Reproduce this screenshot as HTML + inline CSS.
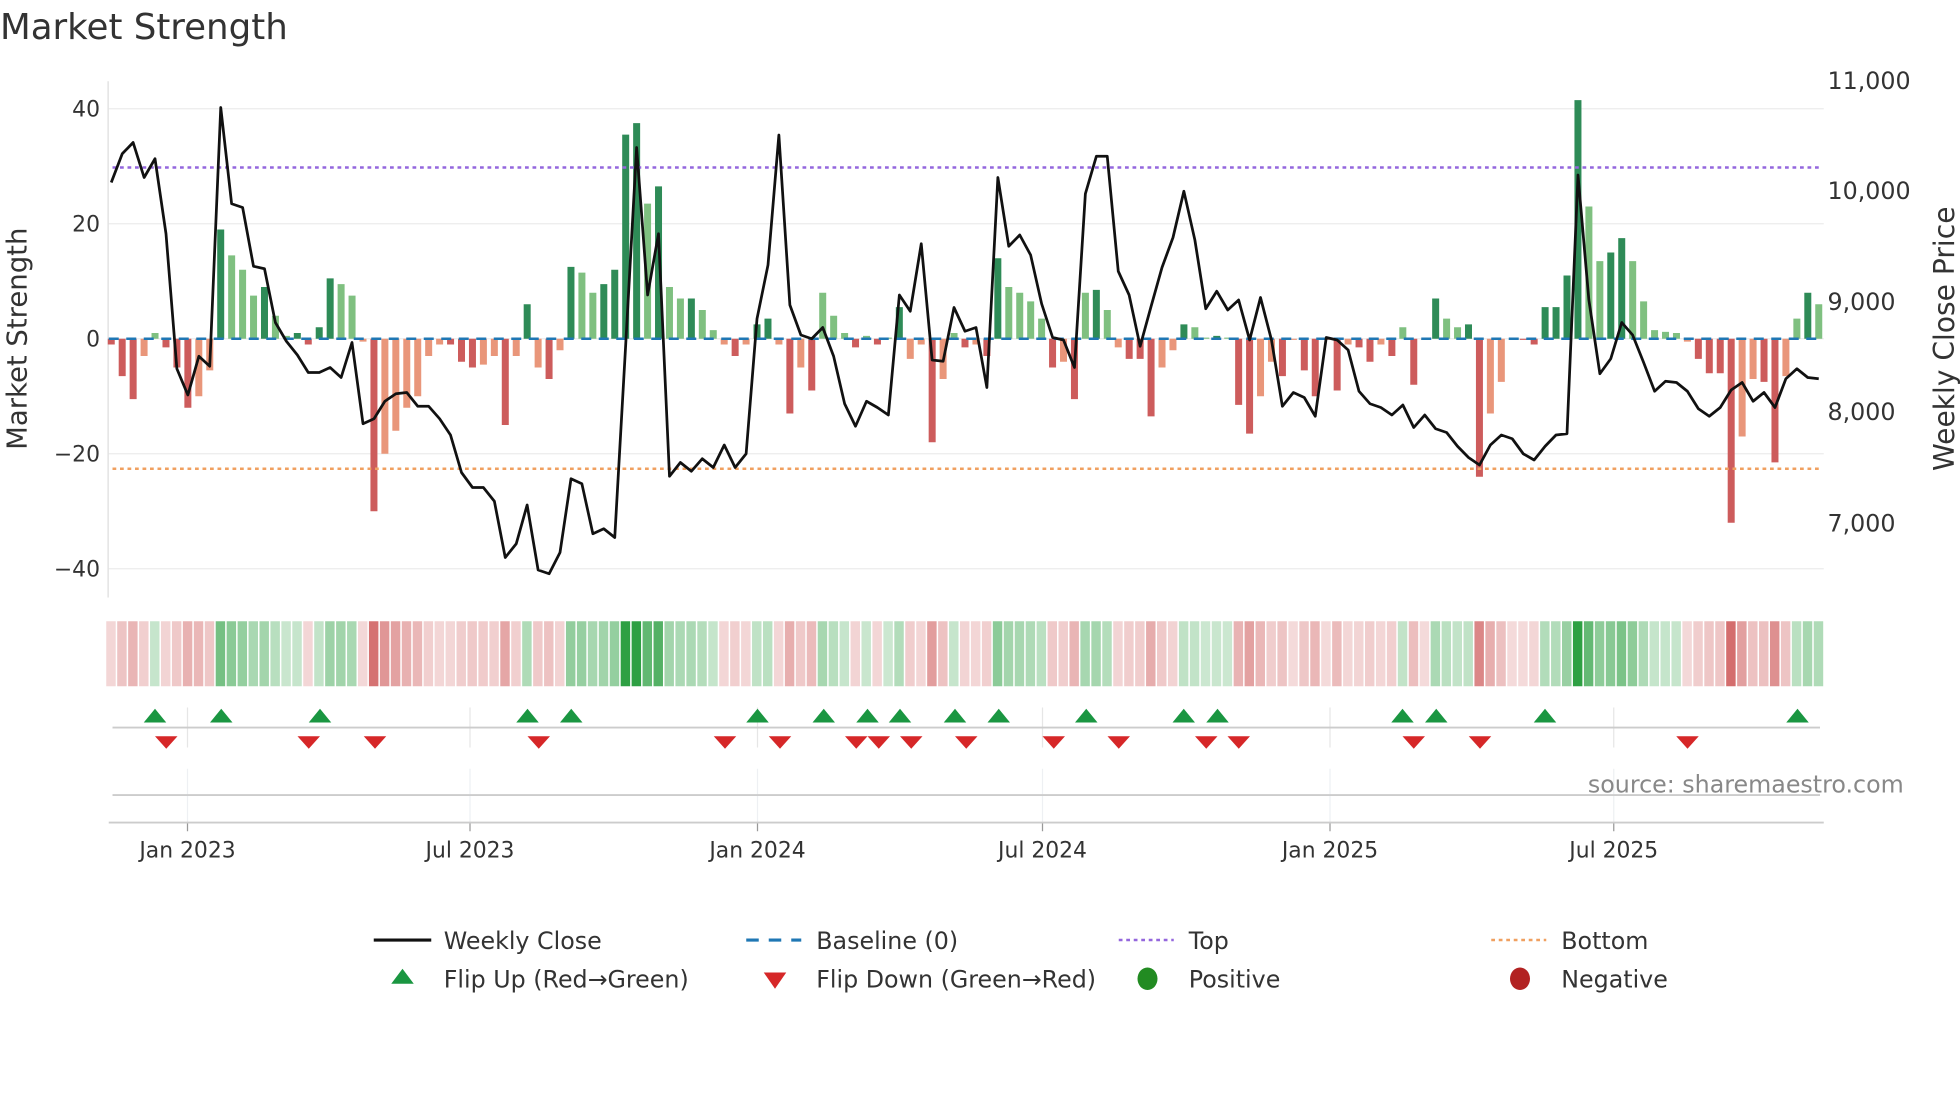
<!DOCTYPE html>
<html><head><meta charset="utf-8"><style>
html,body{margin:0;padding:0;background:#fff;width:1960px;height:1102px;overflow:hidden}
svg{display:block}
text{font-family:"DejaVu Sans","Liberation Sans",sans-serif;fill:#333}
</style></head><body>
<svg id="s" width="1960" height="1102" viewBox="0 0 1568 881.6" xmlns="http://www.w3.org/2000/svg">
<text x="0" y="31" font-size="28.5">Market Strength</text>
<g id="grid"></g>
<g id="bars"></g>
<g id="strip"></g>
<g id="flips"></g>
<g id="lines"></g>
<g font-size="17.5">
<text x="80" y="93" text-anchor="end">40</text>
<text x="80" y="185" text-anchor="end">20</text>
<text x="80" y="277" text-anchor="end">0</text>
<text x="80" y="369" text-anchor="end">−20</text>
<text x="80" y="461" text-anchor="end">−40</text>
<text x="1462" y="71" font-size="19">11,000</text>
<text x="1462" y="159" font-size="19">10,000</text>
<text x="1462" y="248" font-size="19">9,000</text>
<text x="1462" y="336" font-size="19">8,000</text>
<text x="1462" y="425" font-size="19">7,000</text>
<text x="150" y="686" text-anchor="middle">Jan 2023</text>
<text x="376" y="686" text-anchor="middle">Jul 2023</text>
<text x="606" y="686" text-anchor="middle">Jan 2024</text>
<text x="834" y="686" text-anchor="middle">Jul 2024</text>
<text x="1064" y="686" text-anchor="middle">Jan 2025</text>
<text x="1291" y="686" text-anchor="middle">Jul 2025</text>
</g>
<text font-size="22" transform="translate(21,271) rotate(-90)" text-anchor="middle">Market Strength</text>
<text font-size="22.5" transform="translate(1563,271) rotate(-90)" text-anchor="middle">Weekly Close Price</text>
<text x="1523" y="634" font-size="19" text-anchor="end" style="fill:#888">source: sharemaestro.com</text>
<g font-size="19">
<line x1="299" y1="752" x2="345" y2="752" stroke="#111" stroke-width="2.5"/>
<text x="355" y="759">Weekly Close</text>
<line x1="597" y1="752" x2="641" y2="752" stroke="#1f77b4" stroke-width="2.5" stroke-dasharray="10 8"/>
<text x="653" y="759">Baseline (0)</text>
<line x1="895" y1="752" x2="939" y2="752" stroke="#9467dd" stroke-width="2" stroke-dasharray="3 3"/>
<text x="951" y="759">Top</text>
<line x1="1193" y1="752" x2="1237" y2="752" stroke="#f0a060" stroke-width="2" stroke-dasharray="3 3"/>
<text x="1249" y="759">Bottom</text>
<polygon points="322,775 331,787 313,787" fill="#1a9641"/>
<text x="355" y="790">Flip Up (Red→Green)</text>
<polygon points="611,778 629,778 620,791" fill="#d62728"/>
<text x="653" y="790">Flip Down (Green→Red)</text>
<ellipse cx="918" cy="783" rx="8" ry="9" fill="#228b22"/>
<text x="951" y="790">Positive</text>
<ellipse cx="1216" cy="783" rx="8" ry="9" fill="#b22222"/>
<text x="1249" y="790">Negative</text>
</g>
</svg>
<script>
var NS="http://www.w3.org/2000/svg";
function el(p,t,a){var e=document.createElementNS(NS,t);for(var k in a)e.setAttribute(k,a[k]);document.getElementById(p).appendChild(e);return e;}
var V=[-1,-6.5,-10.5,-3,1,-1.5,-5,-12,-10,-5.5,19,14.5,12,7.5,9,4,0.5,1,-1,2,10.5,9.5,7.5,-0.5,-30,-20,-16,-12,-10,-3,-1,-1,-4,-5,-4.5,-3,-15,-3,6,-5,-7,-2,12.5,11.5,8,9.5,12,35.5,37.5,23.5,26.5,9,7,7,5,1.5,-1,-3,-1,2.5,3.5,-1,-13,-5,-9,8,4,1,-1.5,0.5,-1,0.2,5.5,-3.5,-1,-18,-7,1,-1.5,-1,-3,14,9,8,6.5,3.5,-5,-4,-10.5,8,8.5,5,-1.5,-3.5,-3.5,-13.5,-5,-2,2.5,2,0.2,0.5,0.2,-11.5,-16.5,-10,-4,-6.5,-0.2,-5.5,-10,-0.2,-9,-1,-1.5,-4,-1,-3,2,-8,-0.2,7,3.5,2,2.5,-24,-13,-7.5,-0.2,-0.2,-1,5.5,5.5,11,41.5,23,13.5,15,17.5,13.5,6.5,1.5,1.2,1,-0.5,-3.5,-6,-6,-32,-17,-7,-7.5,-21.5,-6.5,3.5,8,6];
var L=[146,123,114,142,127,187,295,316,285,293,86,163,166,213,215,258,273,284,298,298,294,302,274,339,335,321,315,314,325,325,335,348,378,390,390,401,446,435,404,456,459,442,383,387,427,423,430,275,118,236,187,381,370,377,367,374,356,374,363,255,212,108,244,268,271,262,285,323,341,321,326,332,236,249,195,288,289,246,265,262,310,142,197,188,204,243,270,272,294,155,125,125,217,236,277,245,214,190,153,192,247,233,248,240,272,238,272,325,314,318,333,270,272,280,313,323,326,332,324,342,332,343,346,357,366,372,356,348,351,363,368,357,348,347,140,240,299,287,258,268,290,313,305,306,313,327,333,326,312,306,321,314,326,303,295,302,303];
var n=V.length, x0=89, dx=(1455-89)/(n-1);
[87,179,271,363,455].forEach(function(y){el("grid","line",{x1:87,x2:1459,y1:y,y2:y,stroke:"#ececec","stroke-width":1});});
el("grid","line",{x1:86.5,x2:86.5,y1:65,y2:478,stroke:"#ddd","stroke-width":1});
[150,376,606,834,1064,1291].forEach(function(x){
 el("grid","line",{x1:x,x2:x,y1:566,y2:598,stroke:"#e6e6e6","stroke-width":1});
 el("grid","line",{x1:x,x2:x,y1:615,y2:658,stroke:"#eef0f3","stroke-width":1});
 el("grid","line",{x1:x,x2:x,y1:658,y2:665,stroke:"#999","stroke-width":1});});
el("grid","line",{x1:90,x2:1456,y1:582,y2:582,stroke:"#ccc","stroke-width":1.5});
el("grid","line",{x1:90,x2:1456,y1:636,y2:636,stroke:"#ccc","stroke-width":1.5});
el("grid","line",{x1:87,x2:1459,y1:658,y2:658,stroke:"#ccc","stroke-width":1.5});
for(var i=0;i<n;i++){
 var v=V[i],p=i?Math.abs(V[i-1]):0,x=x0+i*dx,y0=271,h=Math.abs(v)*4.6;
 var up=Math.abs(v)>=p, c;
 if(v>0)c=up?"#2e8b57":"#7fc080"; else c=up?"#cd5c5c":"#e9967a";
 el("bars","rect",{x:x-2.8,y:v>0?y0-h:y0,width:5.6,height:Math.max(h,0.6),fill:c});
 var m=Math.min(Math.abs(v)/35,1),sc;
 if(v>0){var a=0.25+0.75*m;sc="rgba(46,160,67,"+a.toFixed(2)+")";}
 else{var a=0.2+0.65*m;sc="rgba(200,70,70,"+a.toFixed(2)+")";}
 el("strip","rect",{x:x-4.4+0.4,y:497,width:dx-1.2,height:52,fill:sc});
}
el("lines","line",{x1:87,x2:1456,y1:271,y2:271,stroke:"#1f77b4","stroke-width":2,"stroke-dasharray":"8 6"});
el("lines","line",{x1:90,x2:1456,y1:134,y2:134,stroke:"#9467dd","stroke-width":2,"stroke-dasharray":"3 3"});
el("lines","line",{x1:90,x2:1456,y1:375,y2:375,stroke:"#f0a060","stroke-width":2,"stroke-dasharray":"3 3"});
var pts=[];for(var i=0;i<L.length&&i<n;i++)pts.push((x0+i*dx).toFixed(1)+","+L[i]);
el("lines","polyline",{points:pts.join(" "),fill:"none",stroke:"#111","stroke-width":2.2,"stroke-linejoin":"round"});
[124,177,256,422,457,606,659,694,720,764,799,869,947,974,1122,1149,1236,1438].forEach(function(x){
 el("flips","polygon",{points:x+",567 "+(x+9)+",578 "+(x-9)+",578",fill:"#1a9641"});});
[133,247,300,431,580,624,685,703,729,773,843,895,965,991,1131,1184,1350].forEach(function(x){
 el("flips","polygon",{points:(x-9)+",589 "+(x+9)+",589 "+x+",599",fill:"#d62728"});});
</script>
</body></html>
